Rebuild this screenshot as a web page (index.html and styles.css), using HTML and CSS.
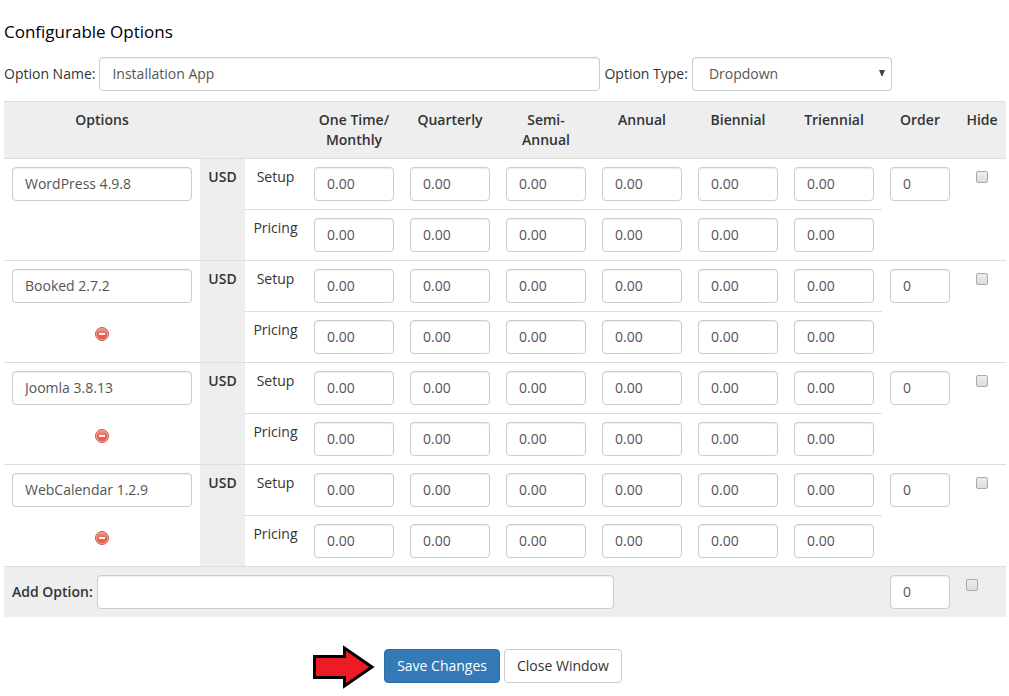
FILE: index.html
```
<!DOCTYPE html>
<html lang="en">
<head>
<meta charset="utf-8">
<title>Configurable Options</title>
<link rel="stylesheet" href="styles.css">
</head>
<body>
<svg class="defs" aria-hidden="true">
  <defs>
    <linearGradient id="red" x1="0" y1="0" x2="0" y2="1">
      <stop offset="0" stop-color="#f2978a"/>
      <stop offset="0.5" stop-color="#e9604f"/>
      <stop offset="1" stop-color="#ea5a4a"/>
    </linearGradient>
    <symbol id="remove" viewBox="0 0 14 14">
      <circle cx="7" cy="7" r="6.5" fill="#f3a79c" stroke="#c95a4c"/>
      <circle cx="7" cy="7" r="5.2" fill="url(#red)"/>
      <rect x="4" y="6" width="6" height="2" fill="#fff"/>
    </symbol>
  </defs>
</svg>
<form class="page">
  <h1 class="title">Configurable Options</h1>
  <div class="fields">
    <label for="name">Option Name:</label>
    <input class="control name" id="name" type="text" value="Installation App">
    <label for="type">Option Type:</label>
    <span class="select-wrap">
      <select class="control type" id="type"><option>Dropdown</option></select>
      <svg class="caret" viewBox="0 0 6 6" aria-hidden="true"><path d="M0 0h6L3.5 6h-1z" fill="#444"/></svg>
    </span>
  </div>
  <table class="grid">
    <colgroup>
      <col><col class="c-cur"><col class="c-kind">
      <col class="c-price"><col class="c-price"><col class="c-price"><col class="c-price"><col class="c-price"><col class="c-price">
      <col class="c-order"><col class="c-hide">
    </colgroup>
    <thead>
      <tr>
        <th>Options</th><th></th><th></th><th>One Time/<br>Monthly</th><th>Quarterly</th><th>Semi-<br>Annual</th><th>Annual</th><th>Biennial</th><th>Triennial</th><th>Order</th><th>Hide</th>
      </tr>
    </thead>
    <tbody id="rows"></tbody>
    <tfoot>
      <tr>
        <td colspan="9">
          <div class="add">
            <label class="strong" for="add">Add Option:</label>
            <input class="control add-input" id="add" type="text">
          </div>
        </td>
        <td><input class="control" type="text" value="0" aria-label="New option order"></td>
        <td><input class="check" type="checkbox" aria-label="Hide new option"></td>
      </tr>
    </tfoot>
  </table>
  <div class="actions">
    <div class="buttons">
      <svg class="arrow" viewBox="0 0 62 44" aria-hidden="true"><path d="M1.500 11.500H31.500V3L59 22 31.500 41V32.500H1.500Z" fill="#ed1c24" stroke="#000" stroke-width="3"/></svg>
      <button class="btn primary" type="button">Save Changes</button>
      <button class="btn" type="button">Close Window</button>
    </div>
  </div>
</form>
<script src="rows.js"></script>
</body>
</html>
```
FILE: styles.css
```
* { box-sizing: border-box; }
body {
  margin: 0;
  background: #fff;
  color: #333;
  font: 14px/20px "Open Sans", sans-serif;
}
.defs { position: absolute; width: 0; height: 0; }
.page { padding: 20px 3px 0 4px; }
.title {
  margin: 0 0 13px;
  color: #000;
  font-size: 17px;
  line-height: 24px;
  font-weight: 400;
}
.fields {
  display: flex;
  align-items: center;
  gap: 4px;
  margin-bottom: 10px;
}
.control {
  display: block;
  width: 100%;
  height: 34px;
  padding: 5px 12px 7px;
  border: 1px solid #ccc;
  border-radius: 4px;
  background: #fff;
  box-shadow: inset 0 1px 1px rgba(0, 0, 0, 0.075);
  color: #555;
  font: inherit;
}
.name { width: 50%; }
.select-wrap { position: relative; width: 200px; }
.type { appearance: none; padding: 6px 16px; }
.caret {
  position: absolute;
  top: 13px;
  right: 7px;
  width: 6px;
  height: 6px;
  pointer-events: none;
}
.grid {
  width: 100%;
  table-layout: fixed;
  border-collapse: separate;
  border-spacing: 0;
}
.c-cur { width: 45px; }
.c-kind { width: 61px; }
.c-price { width: 96px; }
.c-order { width: 76px; }
.c-hide { width: 48px; }
.grid th,
.grid td {
  padding: 8px;
  border-top: 1px solid #ddd;
  vertical-align: top;
}
.grid th,
.strong { font-weight: 600; }
.grid thead th,
.grid tfoot td,
.grid .currency { background: #eee; }
.grid .currency { font-weight: 600; }
.grid tbody td { text-align: center; }
.check {
  appearance: none;
  display: inline-block;
  width: 12px;
  height: 12px;
  margin: 4px 0 0;
  border: 1px solid #aaa;
  border-radius: 2px;
  background: linear-gradient(#eee, #dcdcdc);
  vertical-align: top;
}
.check:checked { background: #337ab7; }
.grid tfoot .check { display: block; }
.remove {
  display: block;
  width: 14px;
  height: 14px;
  margin: 24px auto 0;
  padding: 0;
  border: 0;
  background: none;
  cursor: pointer;
}
.remove svg { display: block; width: 14px; height: 14px; }
.add {
  display: flex;
  align-items: center;
  gap: 4px;
}
.add-input { width: 60%; }
.actions {
  display: flex;
  justify-content: center;
  padding: 32px 4px 12px 0;
}
.buttons {
  position: relative;
  display: flex;
  gap: 4px;
}
.btn {
  height: 34px;
  padding: 6px 12px;
  border: 1px solid #ccc;
  border-radius: 4px;
  background: #fff;
  color: #333;
  font: inherit;
  white-space: nowrap;
  cursor: pointer;
}
.primary {
  border-color: #2e6da4;
  background: #337ab7;
  color: #fff;
}
.arrow {
  position: absolute;
  top: -4px;
  right: 100%;
  width: 62px;
  height: 44px;
  margin-right: 9px;
}
```
FILE: rows.js
```
const options = ["WordPress 4.9.8", "Booked 2.7.2", "Joomla 3.8.13", "WebCalendar 1.2.9"];
const periods = ["one time or monthly", "quarterly", "semi-annual", "annual", "biennial", "triennial"];

const prices = (name, kind) => periods.map(p =>
  `<td><input class="control" type="text" value="0.00" aria-label="${name} ${kind}, ${p}"></td>`).join("");

document.getElementById("rows").innerHTML = options.map((name, i) => `
  <tr>
    <td rowspan="2">
      <input class="control" type="text" value="${name}" aria-label="Option ${i + 1}">
      ${i ? `<button class="remove" type="button" aria-label="Remove ${name}"><svg><use href="#remove"/></svg></button>` : ""}
    </td>
    <td class="currency" rowspan="2">USD</td>
    <td>Setup</td>
    ${prices(name, "setup")}
    <td rowspan="2"><input class="control" type="text" value="0" aria-label="${name} order"></td>
    <td rowspan="2"><input class="check" type="checkbox" aria-label="Hide ${name}"></td>
  </tr>
  <tr>
    <td>Pricing</td>
    ${prices(name, "pricing")}
  </tr>`).join("");
```
